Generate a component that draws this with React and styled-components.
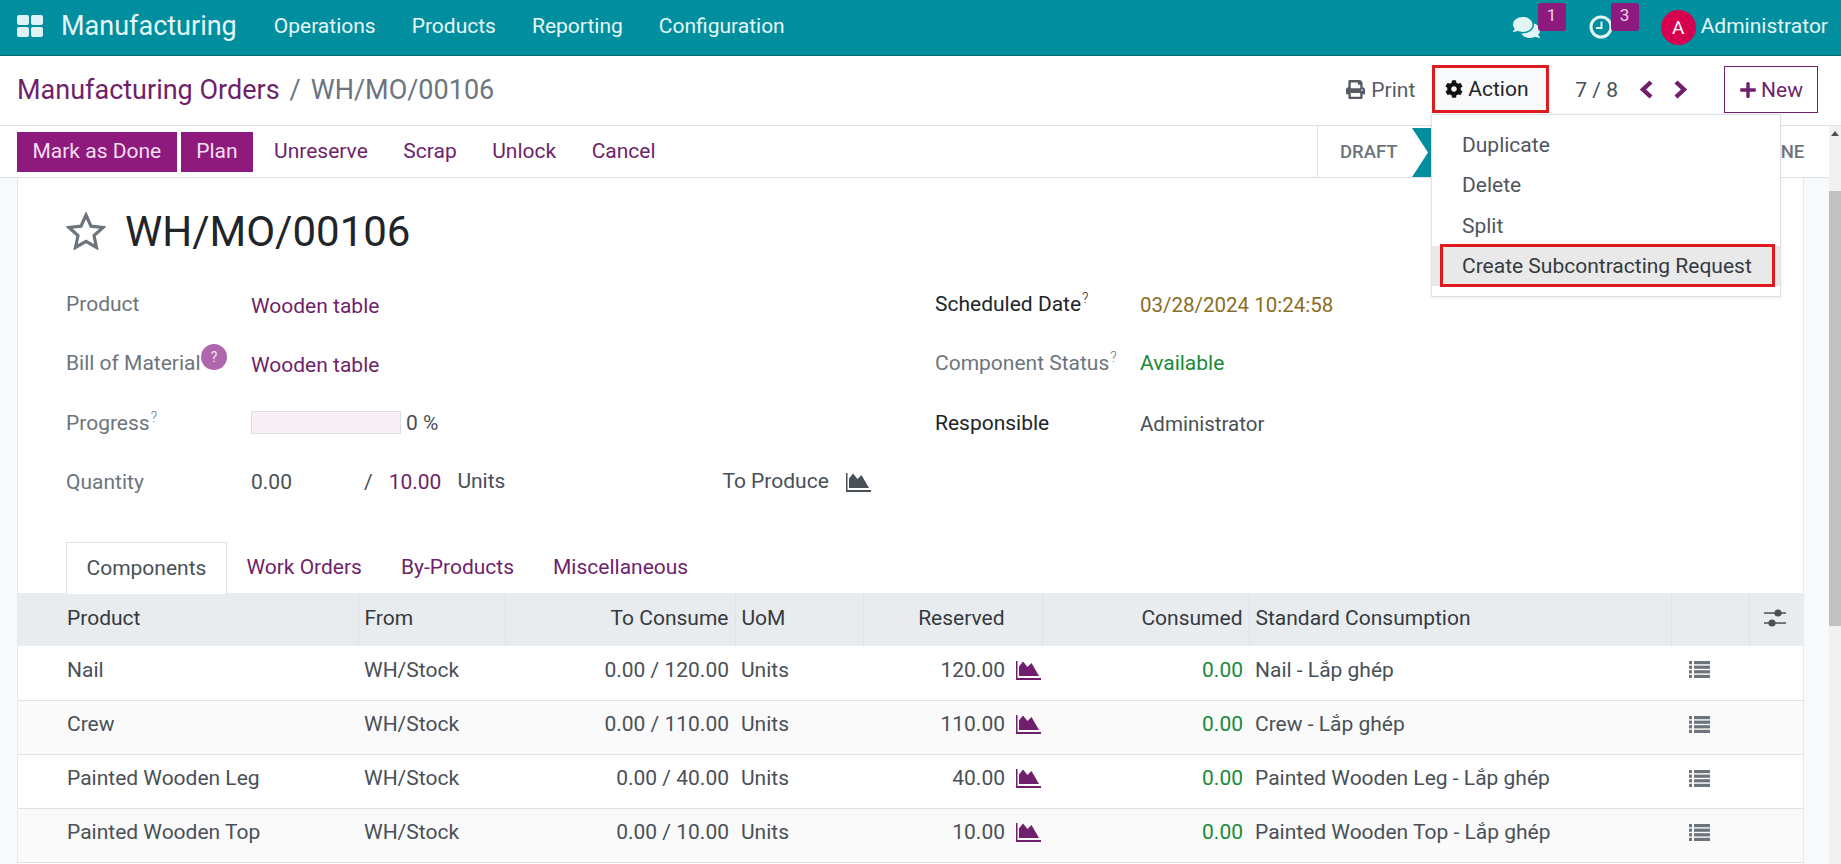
import React from 'react';
import styled, { createGlobalStyle } from 'styled-components';
import { FaComments, FaPrint, FaCog, FaPlus } from 'react-icons/fa';

const Global = createGlobalStyle`
  html, body { margin: 0; padding: 0; height: 100%; overflow: hidden; }
  body { font-family: Roboto, "Noto Sans", sans-serif; font-size: 21px; color: #495057; background: #fff; }
  #root { height: 864px; overflow: hidden; }
  * { box-sizing: border-box; }
`;

const PURPLE = '#6f1f6b';
const Page = styled.div`height: 864px; display: flex; flex-direction: column; overflow: hidden; position: relative;`;
const Nav = styled.header`
  height: 56px; flex: none; background: #018f9f; border-bottom: 1px solid #046a76; color: #fff;
  display: flex; align-items: center; padding: 0 13px 3px 17px;
`;
const Brand = styled.span`font-size: 27px; margin-left: 18px; margin-right: 37px; color: #e6f6f7;`;
const NavItem = styled.span`font-size: 21px; margin-right: 36px; color: #e6f6f7;`;
const NavRight = styled.div`margin-left: auto; display: flex; align-items: center; margin-bottom: -2px;`;
const BadgeWrap = styled.span`display: flex; align-items: center; margin-right: ${p => p.$mr}px; position: relative; color: #e3f5f5;`;
const Badge = styled.span`
  width: 28px; height: 28px; border-radius: 3px; background: #8f1a7e; color: #ead5e6; font-size: 17px;
  display: flex; align-items: center; justify-content: center; margin-left: -2px; margin-top: -20px; padding-bottom: 4px;
`;
const Avatar = styled.span`
  width: 35px; height: 35px; border-radius: 50%; background: #d6004f; color: #fff; font-size: 19px;
  display: flex; align-items: center; justify-content: center; margin-right: 5px;
`;
const UserName = styled.span`font-size: 21px; color: #e6f6f7; margin-top: -3px;`;

const Panel = styled.div`
  height: 70px; flex: none; border-bottom: 1px solid #dee2e6; display: flex; align-items: center; padding: 0 23px 0 17px; background: #fff;
`;
const Crumbs = styled.div`display: flex; align-items: center; padding-bottom: 2px;`;
const Crumb = styled.span`font-size: 27px; color: ${PURPLE};`;
const CrumbSep = styled.span`font-size: 27px; color: #6c757d; margin: 0 10px;`;
const CrumbCurrent = styled.span`font-size: 27px; color: #6c757d;`;
const PanelRight = styled.div`margin-left: auto; display: flex; align-items: center; padding-bottom: 2px;`;
const PrintBtn = styled.span`display: flex; align-items: center; gap: 6px; color: #555c63; margin-right: 17px; font-size: 21px;`;
const ActionBtn = styled.span`
  width: 117px; height: 48px; border: 3px solid #dc1a20; background: #f8f9fa; color: #212529; font-size: 21px;
  display: flex; align-items: center; gap: 5px; padding-left: 10px; margin-right: 26px; margin-bottom: 2px;
`;
const Pager = styled.span`color: #495057; font-size: 21px; margin-right: 21px;`;
const Chevrons = styled.span`display: flex; align-items: center; gap: 19px; margin-right: 36px;`;
const NewBtn = styled.span`
  width: 94px; height: 47px; border: 1px solid ${PURPLE}; color: ${PURPLE}; font-size: 21px;
  display: flex; align-items: center; justify-content: center; gap: 4px;
`;

const Menu = styled.div`
  position: absolute; left: 1431px; top: 114px; width: 350px; height: 183px; background: #fff;
  border: 1px solid #dee2e6; box-shadow: 0 1px 4px rgba(0,0,0,.08); padding-top: 10px; z-index: 5;
`;
const MenuItem = styled.div`
  height: 40.3px; display: flex; align-items: center; padding-left: 30px; font-size: 21px; color: ${p => p.$active ? '#343a40' : '#4f565d'};
  background: ${p => p.$active ? '#e9e9ea' : 'transparent'}; position: relative;
`;
const MenuMark = styled.span`
  position: absolute; left: 8px; right: 5px; top: -2px; bottom: -1px; border: 3px solid #dc1a20;
`;

const Body = styled.div`flex: 1; display: flex; min-height: 0;`;
const Main = styled.div`flex: 1; display: flex; flex-direction: column; min-width: 0;`;
const StatusRow = styled.div`
  height: 52px; flex: none; background: #fff; border-bottom: 1px solid #dee2e6; display: flex; align-items: center; padding-left: 17px;
`;
const PrimaryBtn = styled.span`
  height: 40px; padding: 0 15.5px 2px; background: #8f1a7e; color: #f3dfef; font-size: 21px; display: flex; align-items: center; margin-right: 4px;
`;
const LinkBtn = styled.span`color: ${PURPLE}; font-size: 21px; margin-left: ${p => p.$ml}px; margin-bottom: 2px;`;
const Stages = styled.div`margin-left: auto; height: 100%; width: 512px; border-left: 1px solid #dee2e6; display: flex; align-items: center; position: relative;`;
const StageText = styled.span`font-size: 18.5px; font-weight: 500; color: #6c757d; margin-left: ${p => p.$ml}px; white-space: nowrap;`;
const StageArrow = styled.svg`position: absolute; left: 94px; top: 2px;`;

const Content = styled.div`flex: 1; background: #f8f9fa; padding: 0 26px 0 18px; min-height: 0; overflow: hidden;`;
const Sheet = styled.div`background: #fff; box-shadow: -1px 0 #e6e8ea, 1px 0 #e6e8ea; padding-top: 30px; height: 100%;`;
const Title = styled.div`display: flex; align-items: center; height: 48px; padding-left: 48px; margin-bottom: 18px; font-size: 42px; color: #212529; gap: 19px; padding-bottom: 2px;`;
const FormGrid = styled.div`
  display: grid; grid-template-columns: 185px 684px 205px 1fr; grid-auto-rows: 59.5px; padding-left: 48px; align-items: center; margin-bottom: 30px; font-size: 21px;
`;
const Label = styled.span`color: ${p => p.$dark ? '#212529' : '#6c757d'}; position: relative; white-space: nowrap;`;
const Sup = styled.sup`font-size: 14px; line-height: 0; margin-left: 1px; font-weight: 300;`;
const Value = styled.span`color: ${p => p.$color || '#495057'}; padding-top: ${p => p.$top ?? 4}px; font-size: ${p => p.$size || 21}px; white-space: nowrap;`;
const HelpDot = styled.span`
  position: absolute; left: 135px; top: -7px; width: 26px; height: 26px; border-radius: 50%; background: #b066ad; color: #f3e4f2; font-size: 14px;
  display: flex; align-items: center; justify-content: center;
`;
const ProgressRow = styled.span`display: flex; align-items: center; gap: 5px; color: #495057;`;
const ProgressBar = styled.span`width: 150px; height: 23px; background: #f7eef6; border: 1px solid #dedde0;`;
const QtyRow = styled.span`display: flex; align-items: center; color: #495057; white-space: nowrap;`;
const QtySlash = styled.span`margin-left: 72px; margin-right: 16px;`;
const QtyTotal = styled.span`color: ${PURPLE}; margin-right: 16px;`;
const QtyUnits = styled.span`margin-right: 217px; margin-top: -3px;`;
const ToProduce = styled.span`color: #495057; margin-right: 17px; margin-top: -3px;`;

const Tabs = styled.div`display: flex; height: 52px; padding-left: 48px; align-items: stretch; font-size: 21px; position: relative; z-index: 1; margin-bottom: -1px;`;
const Tab = styled.span`
  display: flex; align-items: center; padding: 0 19.5px 2px; color: ${p => p.$active ? '#495057' : PURPLE};
  ${p => p.$active ? 'background:#fff;border:1px solid #dee2e6;border-bottom:none;' : ''}
`;
const Table = styled.table`width: 100%; border-collapse: collapse; table-layout: fixed; font-size: 21px;`;
const Th = styled.th`
  height: 53px; background: #e9ecef; color: #343a40; font-weight: 400; padding: 0 ${p => p.$right ? '6px' : '0'} 4px ${p => p.$first ? '49px' : p.$icon ? '14px' : '6px'};
  text-align: ${p => p.$right ? 'right' : 'left'}; border-right: 1px solid #dee2e6; white-space: nowrap;
  &:last-child { border-right: none; }
`;
const HeadGap = styled.span`padding-right: 31px;`;
const Tr = styled.tr`background: ${p => p.$alt ? '#fafafa' : '#fff'}; border-bottom: 1px solid #dee2e6;`;
const Td = styled.td`
  height: 54px; padding: 0 ${p => p.$right ? '6px' : '0'} 6px ${p => p.$first ? '49px' : '6px'}; color: ${p => p.$color || '#495057'};
  text-align: ${p => p.$right ? 'right' : 'left'}; white-space: nowrap;
`;
const ReservedTd = styled(Td)`padding-right: 1px;`;
const ListCell = styled.span`display: block; margin-left: 12px;`;
const ReservedCell = styled.span`display: flex; justify-content: flex-end; align-items: center; gap: 11px;`;

const ScrollTrack = styled.div`width: 12px; flex: none; background: #f1f1f1; display: flex; flex-direction: column; align-items: center; padding-top: 5px;`;
const ScrollArrow = styled.span`width: 0; height: 0; border-left: 4px solid transparent; border-right: 4px solid transparent; border-bottom: 5px solid #505050;`;
const ScrollThumb = styled.span`width: 12px; height: 435px; background: #c1c1c1; margin-top: 55px;`;

const Apps = () => (
  <svg width="26" height="22" viewBox="0 0 26 22" fill="#dff3f4">
    <rect x="0" y="0" width="12" height="10" rx="2" /><rect x="14" y="0" width="12" height="10" rx="2" />
    <rect x="0" y="12" width="12" height="10" rx="2" /><rect x="14" y="12" width="12" height="10" rx="2" />
  </svg>
);
const Clock = () => (
  <svg width="24" height="24" viewBox="0 0 24 24" fill="none" stroke="#e3f5f5">
    <circle cx="12" cy="12" r="10" strokeWidth="3" />
    <path d="M12.5 6.5v6.5H7" strokeWidth="2" />
  </svg>
);
const Star = () => (
  <svg width="40" height="38" viewBox="0 0 40 38" fill="none" stroke="#6c757d" strokeWidth="3.2" strokeLinejoin="miter">
    <path d="M20 3 L25 14.2 L37 15.5 L28 23.6 L30.5 35.5 L20 29.4 L9.5 35.5 L12 23.6 L3 15.5 L15 14.2 Z" />
  </svg>
);
const Chevron = ({ dir }) => (
  <svg width="15" height="19" viewBox="0 0 15 19" fill="none" stroke={PURPLE} strokeWidth="4.4">
    <path d={dir === 'left' ? 'M12 2 L4 9.5 L12 17' : 'M3 2 L11 9.5 L3 17'} />
  </svg>
);
const AreaChart = ({ color }) => (
  <svg width="25" height="20" viewBox="0 0 25 20" fill={color}>
    <path d="M0 1h1.5v17H25V20H0z" />
    <path d="M3 16V6.5L7 1.5 11.5 7 15.5 3 23 16z" />
  </svg>
);
const ListIcon = () => (
  <svg width="21" height="17" viewBox="0 0 21 17" fill="#6c757d" style={{ display: 'block' }}>
    {[0, 4.6, 9.2, 13.8].map(y => <g key={y}><rect x="0" y={y} width="3" height="3.2" /><rect x="5" y={y} width="16" height="3.2" /></g>)}
  </svg>
);
const AdjustIcon = () => (
  <svg width="22" height="18" viewBox="0 0 22 18" fill="#495057" style={{ display: 'block' }}>
    <rect x="0" y="3.3" width="22" height="1.5" /><circle cx="14" cy="4" r="3.6" />
    <rect x="0" y="13.3" width="22" height="1.5" /><circle cx="8" cy="14" r="3.6" />
  </svg>
);

const cols = [340, 147, 230, 128, 179, 207, 422, 78, 54];
const rows = [
  ['Nail', '0.00 / 120.00', '120.00', 'Nail - Lắp ghép'],
  ['Crew', '0.00 / 110.00', '110.00', 'Crew - Lắp ghép'],
  ['Painted Wooden Leg', '0.00 / 40.00', '40.00', 'Painted Wooden Leg - Lắp ghép'],
  ['Painted Wooden Top', '0.00 / 10.00', '10.00', 'Painted Wooden Top - Lắp ghép'],
];

export default function App() {
  return (
    <Page>
      <Global />
      <Nav>
        <Apps />
        <Brand>Manufacturing</Brand>
        <NavItem>Operations</NavItem>
        <NavItem>Products</NavItem>
        <NavItem>Reporting</NavItem>
        <NavItem>Configuration</NavItem>
        <NavRight>
          <BadgeWrap $mr={23}><FaComments size={27} /><Badge>1</Badge></BadgeWrap>
          <BadgeWrap $mr={22}><Clock /><Badge>3</Badge></BadgeWrap>
          <Avatar>A</Avatar>
          <UserName>Administrator</UserName>
        </NavRight>
      </Nav>
      <Panel>
        <Crumbs>
          <Crumb>Manufacturing Orders</Crumb>
          <CrumbSep>/</CrumbSep>
          <CrumbCurrent>WH/MO/00106</CrumbCurrent>
        </Crumbs>
        <PanelRight>
          <PrintBtn><FaPrint size={19} />Print</PrintBtn>
          <ActionBtn><FaCog size={18} color="#111" />Action</ActionBtn>
          <Pager>7 / 8</Pager>
          <Chevrons><Chevron dir="left" /><Chevron dir="right" /></Chevrons>
          <NewBtn><FaPlus size={18} />New</NewBtn>
        </PanelRight>
      </Panel>
      <Menu>
        <MenuItem>Duplicate</MenuItem>
        <MenuItem>Delete</MenuItem>
        <MenuItem>Split</MenuItem>
        <MenuItem $active><MenuMark />Create Subcontracting Request</MenuItem>
      </Menu>
      <Body>
        <Main>
          <StatusRow>
            <PrimaryBtn>Mark as Done</PrimaryBtn>
            <PrimaryBtn>Plan</PrimaryBtn>
            <LinkBtn $ml={17}>Unreserve</LinkBtn>
            <LinkBtn $ml={35.5}>Scrap</LinkBtn>
            <LinkBtn $ml={35.5}>Unlock</LinkBtn>
            <LinkBtn $ml={35.5}>Cancel</LinkBtn>
            <Stages>
              <StageText $ml={22}>DRAFT</StageText>
              <StageArrow width="30" height="49" viewBox="0 0 30 49"><path d="M0 0 L16 24.5 L0 49 H30 V0 Z" fill="#018f9f" /></StageArrow>
              <StageText $ml={383}>NE</StageText>
            </Stages>
          </StatusRow>
          <Content>
            <Sheet>
              <Title><Star />WH/MO/00106</Title>
              <FormGrid>
                <Label>Product</Label>
                <Value $color={PURPLE}>Wooden table</Value>
                <Label $dark>Scheduled Date<Sup>?</Sup></Label>
                <Value $color="#8a6d1f" $size={20.5} $top={3}>03/28/2024 10:24:58</Value>

                <Label>Bill of Material<HelpDot>?</HelpDot></Label>
                <Value $color={PURPLE}>Wooden table</Value>
                <Label>Component Status<Sup>?</Sup></Label>
                <Value $color="#198a3a" $top={0}>Available</Value>

                <Label>Progress<Sup>?</Sup></Label>
                <ProgressRow><ProgressBar />0 %</ProgressRow>
                <Label $dark>Responsible</Label>
                <Value $size={20.5} $top={3}>Administrator</Value>

                <Label>Quantity</Label>
                <QtyRow>
                  0.00
                  <QtySlash>/</QtySlash>
                  <QtyTotal>10.00</QtyTotal>
                  <QtyUnits>Units</QtyUnits>
                  <ToProduce>To Produce</ToProduce>
                  <AreaChart color="#495057" />
                </QtyRow>
              </FormGrid>
              <Tabs>
                <Tab $active>Components</Tab>
                <Tab>Work Orders</Tab>
                <Tab>By-Products</Tab>
                <Tab>Miscellaneous</Tab>
              </Tabs>
              <Table>
                <colgroup>{cols.map((w, i) => <col key={i} style={{ width: w }} />)}</colgroup>
                <thead>
                  <tr>
                    <Th $first>Product</Th>
                    <Th>From</Th>
                    <Th $right>To Consume</Th>
                    <Th>UoM</Th>
                    <Th $right><HeadGap>Reserved</HeadGap></Th>
                    <Th $right>Consumed</Th>
                    <Th>Standard Consumption</Th>
                    <Th />
                    <Th $icon><AdjustIcon /></Th>
                  </tr>
                </thead>
                <tbody>
                  {rows.map((r, i) => (
                    <Tr key={r[0]} $alt={i % 2 === 1}>
                      <Td $first>{r[0]}</Td>
                      <Td>WH/Stock</Td>
                      <Td $right>{r[1]}</Td>
                      <Td>Units</Td>
                      <ReservedTd $right><ReservedCell>{r[2]}<AreaChart color={PURPLE} /></ReservedCell></ReservedTd>
                      <Td $right $color="#198a3a">0.00</Td>
                      <Td>{r[3]}</Td>
                      <Td><ListCell><ListIcon /></ListCell></Td>
                      <Td />
                    </Tr>
                  ))}
                </tbody>
              </Table>
            </Sheet>
          </Content>
        </Main>
        <ScrollTrack><ScrollArrow /><ScrollThumb /></ScrollTrack>
      </Body>
    </Page>
  );
}
